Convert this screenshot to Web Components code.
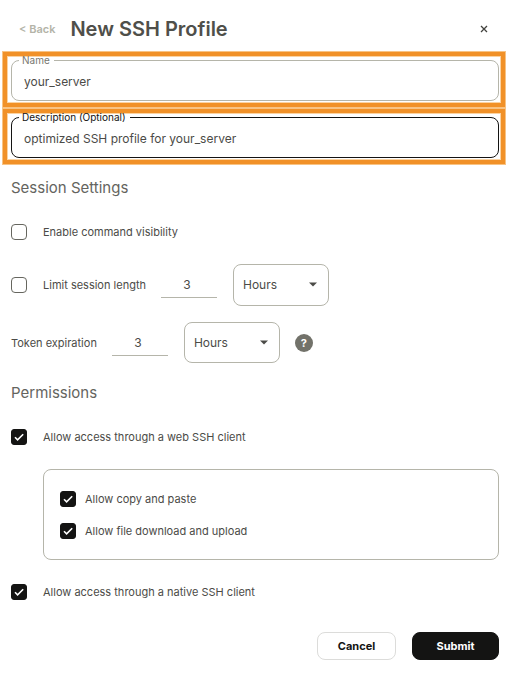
<!DOCTYPE html>
<html lang="en">
<head>
<meta charset="utf-8">
<title>New SSH Profile</title>
<style>
body{margin:0;background:#fff;color:#4b4b47;font-family:Inter,"Liberation Sans",sans-serif;font-size:11px;line-height:16px}
</style>
</head>
<body>
<ssh-profile-form></ssh-profile-form>
<script>
const base = `<style>*{box-sizing:border-box}button,input,select{font:inherit;color:inherit;margin:0}</style>`;
class Base extends HTMLElement {
  connectedCallback() {
    if (this.shadowRoot) return;
    this.attachShadow({ mode: 'open' }).innerHTML = base + this.view();
  }
  attr(name) { return this.getAttribute(name) || ''; }
}

customElements.define('form-header', class extends Base {
  view() { return `<style>
    :host{display:flex;align-items:center;height:51px;padding:6px 15px 0 19px}
    a{color:#b4b4a8;font-weight:600;text-decoration:none;margin-right:15px}
    h1{margin:0;font-size:20px;line-height:28px;font-weight:600;color:#4f4f4a;flex:1}
    button{width:16px;height:16px;padding:4px;border:0;background:none;display:block}
    svg{display:block}
    </style><a href="#">&lt; Back</a><h1><slot></slot></h1>
    <button type="button" aria-label="Close"><svg width="8" height="8" viewBox="0 0 8 8" fill="none" stroke="#42423e" stroke-width="1.3"><path d="M1 1l6 6M7 1L1 7"/></svg></button>`; }
});

customElements.define('highlight-box', class extends Base {
  view() { return `<style>
    :host{display:block;box-sizing:border-box;margin:0 1px 0 2px;border:1px solid #f8c384;padding:5px 6px 6px 8px;
      box-shadow:inset 0 0 0 4px #f19128,inset 0 0 0 5px #fbd3a2}
    </style><slot></slot>`; }
});

customElements.define('text-field', class extends Base {
  view() { return `<style>
    :host{display:block;--line:#b5b5aa;color:#77776f}
    :host([active]){--line:#141413;color:#141413}
    fieldset{margin:0;padding:0 8px;min-width:0;height:44px;border:1px solid var(--line);border-radius:8px}
    legend{padding:0 4px 0 3px;margin-left:-1px;font-size:10px;line-height:6px}
    input{display:block;width:100%;height:36px;padding:0 4px;border:0;outline:0;background:none;font-size:12px;color:#4b4b47}
    </style><fieldset><legend><label for="f">${this.attr('label')}</label></legend>
    <input id="f" type="text" value="${this.attr('value')}"></fieldset>`; }
});

customElements.define('check-option', class extends Base {
  view() { return `<style>
    :host{display:flex;align-items:center;gap:var(--check-gap,16px)}
    input{appearance:none;flex:none;width:16px;height:16px;border:1px solid #66665f;border-radius:4px;background:#fff}
    input:checked{border-color:#141413;background:#141413;border-radius:3px}
    .box{position:relative;display:block;flex:none;width:16px;height:16px}
    .box input{display:block}
    svg{position:absolute;inset:0;display:none;pointer-events:none}
    input:checked + svg{display:block}
    </style><span class="box"><input id="c" type="checkbox" ${this.hasAttribute('checked') ? 'checked' : ''}>
    <svg width="16" height="16" viewBox="0 0 16 16" fill="none" stroke="#fff" stroke-width="1.6"><path d="M4 8.3l2.6 2.6 5.6-5.6"/></svg></span>
    <label for="c"><slot></slot></label>`; }
});

customElements.define('duration-picker', class extends Base {
  view() { return `<style>
    :host{display:flex;align-items:center;gap:16px}
    .n{width:56px;height:26px;padding:0 4px 0 0;border:0;border-bottom:1px solid #b5b5aa;border-radius:0;outline:0;background:none;text-align:center;font-size:12px}
    .s{position:relative}
    select{display:block;appearance:none;width:96px;height:var(--select-height,42px);padding:0 24px 0 9px;border:1px solid #b5b5aa;border-radius:8px;background:#fff;font-size:12px}
    svg{position:absolute;right:12px;top:18px;pointer-events:none}
    </style><input class="n" type="text" inputmode="numeric" value="3" aria-label="${this.attr('label')}">
    <div class="s"><select aria-label="${this.attr('label')} unit"><option>Hours</option><option>Days</option></select>
    <svg width="8" height="5" viewBox="0 0 8 5"><path d="M0 .5h8L4 4.5z" fill="#4b4b47"/></svg></div>`; }
});

customElements.define('help-button', class extends Base {
  view() { return `<style>
    :host{display:block}
    button{display:block;width:18px;height:18px;padding:0;border:0;border-radius:50%;background:#72726a;color:#fff;font-size:11px;line-height:18px;font-weight:700;text-align:center}
    </style><button type="button" aria-label="Help">?</button>`; }
});

customElements.define('action-button', class extends Base {
  view() { return `<style>
    :host{display:block}
    button{display:block;height:28px;min-width:79px;padding:0 19px;border:1px solid #dcdcda;border-radius:8px;background:#fff;color:#141413;font-weight:700;line-height:16px}
    :host([primary]) button{min-width:87px;background:#141413;border-color:#141413;color:#fff}
    </style><button type="button"><slot></slot></button>`; }
});

customElements.define('form-section', class extends Base {
  view() { return `<style>
    :host{display:block;padding:0 8px 0 11px}
    h2{margin:0;font-size:15px;line-height:20px;font-weight:400;color:#64645e}
    </style><h2>${this.attr('heading')}</h2><slot></slot>`; }
});

customElements.define('ssh-profile-form', class extends Base {
  view() { return `<style>
    :host{display:block}
    .session{margin-top:13px}
    .row{display:flex;align-items:center;gap:15px}
    .first{margin-top:26px}
    .limit{margin-top:24px}
    .token{margin-top:16px;--select-height:41px}
    .perms{margin-top:20px}
    .group{--check-gap:9px;display:grid;gap:16px;margin:24px 0 24px 32px;padding:21px 16px 20px;border:1px solid #b5b5aa;border-radius:8px}
    footer{display:flex;justify-content:flex-end;gap:16px;padding:32px 8px 13px 11px}
    </style>
    <form-header>New SSH Profile</form-header>
    <highlight-box><text-field label="Name" value="your_server"></text-field></highlight-box>
    <highlight-box><text-field active label="Description (Optional)" value="optimized SSH profile for your_server"></text-field></highlight-box>
    <form-section class="session" heading="Session Settings">
      <check-option class="first">Enable command visibility</check-option>
      <div class="row limit"><check-option>Limit session length</check-option><duration-picker label="Session length"></duration-picker></div>
      <div class="row token"><span>Token expiration</span><duration-picker label="Token expiration"></duration-picker><help-button></help-button></div>
    </form-section>
    <form-section class="perms" heading="Permissions">
      <check-option class="first" checked>Allow access through a web SSH client</check-option>
      <div class="group"><check-option checked>Allow copy and paste</check-option><check-option checked>Allow file download and upload</check-option></div>
      <check-option checked>Allow access through a native SSH client</check-option>
    </form-section>
    <footer><action-button>Cancel</action-button><action-button primary>Submit</action-button></footer>`; }
});
</script>
</body>
</html>
